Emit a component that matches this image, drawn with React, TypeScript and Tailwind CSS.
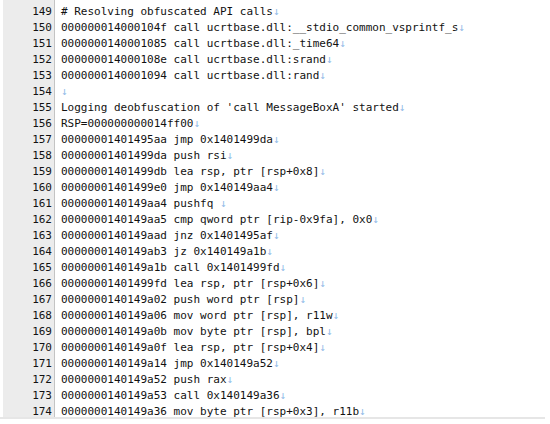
const lines: [number, string][] = [
  [149, '# Resolving obfuscated API calls'],
  [150, '000000014000104f call ucrtbase.dll:__stdio_common_vsprintf_s'],
  [151, '0000000140001085 call ucrtbase.dll:_time64'],
  [152, '000000014000108e call ucrtbase.dll:srand'],
  [153, '0000000140001094 call ucrtbase.dll:rand'],
  [154, ''],
  [155, "Logging deobfuscation of 'call MessageBoxA' started"],
  [156, 'RSP=000000000014ff00'],
  [157, '00000001401495aa jmp 0x1401499da'],
  [158, '00000001401499da push rsi'],
  [159, '00000001401499db lea rsp, ptr [rsp+0x8]'],
  [160, '00000001401499e0 jmp 0x140149aa4'],
  [161, '0000000140149aa4 pushfq '],
  [162, '0000000140149aa5 cmp qword ptr [rip-0x9fa], 0x0'],
  [163, '0000000140149aad jnz 0x1401495af'],
  [164, '0000000140149ab3 jz 0x140149a1b'],
  [165, '0000000140149a1b call 0x1401499fd'],
  [166, '00000001401499fd lea rsp, ptr [rsp+0x6]'],
  [167, '0000000140149a02 push word ptr [rsp]'],
  [168, '0000000140149a06 mov word ptr [rsp], r11w'],
  [169, '0000000140149a0b mov byte ptr [rsp], bpl'],
  [170, '0000000140149a0f lea rsp, ptr [rsp+0x4]'],
  [171, '0000000140149a14 jmp 0x140149a52'],
  [172, '0000000140149a52 push rax'],
  [173, '0000000140149a53 call 0x140149a36'],
  [174, '0000000140149a36 mov byte ptr [rsp+0x3], r11b'],
]

export default function App() {
  return (
    <div className="w-[550px] h-[424px] bg-white overflow-hidden font-['DejaVu_Sans_Mono',monospace] text-[11px] text-[#111]">
      <div className="flex h-[417px] overflow-hidden ml-[3px]">
        {/* Gutter */}
        <div className="w-[52px] shrink-0 bg-[#ececec] border-r border-[#c4c4c4] pt-[4px] pr-[2px] text-right">
          {lines.map(([n]) => (
            <div key={n} className="h-[16px] leading-[16px]">{n}</div>
          ))}
        </div>
        {/* Code */}
        <div className="pl-[6px] pt-[4px] whitespace-pre">
          {lines.map(([n, t]) => (
            <div key={n} className="h-[16px] leading-[16px]">
              {t}
              <span className="text-[#94bce8]">↓</span>
            </div>
          ))}
        </div>
      </div>
      {/* Scrollbar track */}
      <div className="h-[2px] w-[545px] bg-[#e6e6e6]" />
    </div>
  )
}
